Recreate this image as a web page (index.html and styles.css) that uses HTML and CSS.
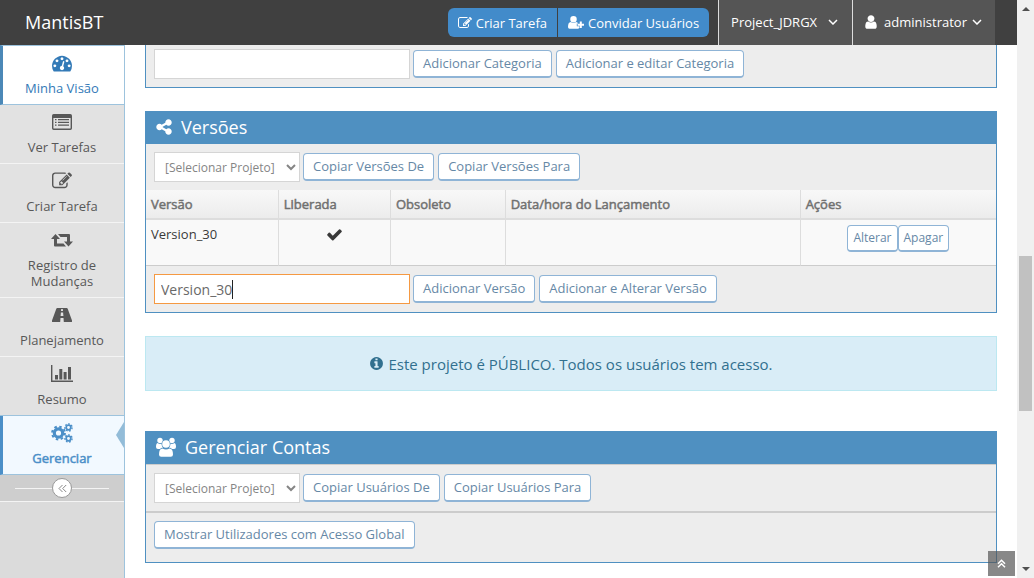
FILE: index.html
```html
<!DOCTYPE html>
<html lang="pt-BR">
<head>
<meta charset="utf-8">
<title>MantisBT</title>
<link rel="stylesheet" href="styles.css">
</head>
<body>
<svg class="sprite" aria-hidden="true">
  <symbol id="i-edit" viewBox="0 0 1792 1792"><path d="M888 1184l116-116-152-152-116 116v56h96v96h56zm440-720q-16-16-33 1l-350 350q-17 17-1 33t33-1l350-350q17-17 1-33zm80 594v190q0 119-84.500 203.500t-203.500 84.500h-832q-119 0-203.500-84.500t-84.500-203.500v-832q0-119 84.500-203.500t203.500-84.500h832q63 0 117 25 15 7 18 23 3 17-9 29l-49 49q-14 14-32 8-23-6-45-6h-832q-66 0-113 47t-47 113v832q0 66 47 113t113 47h832q66 0 113-47t47-113v-126q0-13 9-22l64-64q15-15 35-7t20 29zm-96-738l288 288-672 672h-288v-288zm444 132l-92 92-288-288 92-92q28-28 68-28t68 28l152 152q28 28 28 68t-28 68z"/></symbol>
  <symbol id="i-user" viewBox="0 0 1792 1792"><path d="M1536 1399q0 109-62.500 187t-150.500 78h-854q-88 0-150.500-78t-62.500-187q0-85 8.500-160.500t31.500-152 58.500-131 94-89 134.500-34.500q131 128 313 128t313-128q76 0 134.500 34.500t94 89 58.500 131 31.500 152 8.500 160.500zm-256-887q0 159-112.500 271.500t-271.500 112.500-271.500-112.500-112.500-271.500 112.500-271.500 271.500-112.500 271.500 112.500 112.500 271.500z"/></symbol>
  <symbol id="i-down" viewBox="0 0 10 6"><path d="M1 1l4 4 4-4" fill="none" stroke="currentColor" stroke-width="1.500"/></symbol>
</svg>
<div class="window">
  <div class="page">
    <header class="navbar">
      <a class="brand" href="#">MantisBT</a>
      <div class="nav-actions">
        <a class="nav-btn" href="#"><svg class="icon-14"><use href="#i-edit"/></svg>Criar Tarefa</a>
        <a class="nav-btn" href="#"><svg class="icon-add" viewBox="0 0 16 13"><path d="M5.500 0a3.200 3.200 0 0 1 0 6.500a3.200 3.200 0 0 1 0-6.500zM2.800 6q2.700 2 5.400 0q1.500.2 2 1.500H8.800v2.700h2.500V12q-.5.800-1.500.8H1.600Q0 12.800 0 11q0-4.800 2.800-5zM11.800 5.500h2v2.200H16v2h-2.200V12h-2V9.700H9.600v-2h2.200z"/></svg>Convidar Usuários</a>
      </div>
      <button class="nav-menu project" type="button">Project_JDRGX<svg class="chevron"><use href="#i-down"/></svg></button>
      <button class="nav-menu account" type="button"><svg class="icon-user"><use href="#i-user"/></svg>administrator<svg class="chevron"><use href="#i-down"/></svg></button>
    </header>
    <div class="columns">
      <nav class="sidebar">
        <a class="side-item current" href="#"><svg class="icon-side" viewBox="0 0 1792 1792"><path d="M384 1152q0-53-37.500-90.500t-90.500-37.500-90.500 37.500-37.500 90.500 37.500 90.500 90.500 37.500 90.500-37.500 37.500-90.500zm192-448q0-53-37.500-90.500t-90.500-37.500-90.500 37.500-37.500 90.500 37.500 90.500 90.500 37.500 90.500-37.500 37.500-90.500zm428 481l101-382q6-26-7.500-48.500t-38.500-29.500-48 6.500-30 39.500l-101 382q-60 5-107 43.500t-63 98.500q-20 77 20 146t117 89 146-20 89-117q16-60-6-117t-72-91zm660-33q0-53-37.500-90.500t-90.500-37.500-90.500 37.500-37.500 90.500 37.500 90.500 90.500 37.500 90.500-37.500 37.500-90.500zm-640-640q0-53-37.500-90.500t-90.500-37.500-90.500 37.500-37.500 90.500 37.500 90.500 90.500 37.500 90.500-37.500 37.500-90.500zm448 192q0-53-37.500-90.500t-90.500-37.500-90.500 37.500-37.500 90.500 37.500 90.500 90.500 37.500 90.500-37.500 37.500-90.500zm320 448q0 261-141 483-19 29-54 29h-1402q-35 0-54-29-141-221-141-483 0-182 71-348t191-286 286-191 348-71 348 71 286 191 191 286 71 348z"/></svg><span>Minha Visão</span></a>
        <a class="side-item" href="#"><svg class="icon-side" viewBox="0 0 20 20"><path fill-rule="evenodd" d="M1.700 2h16.600Q20 2 20 3.700v12.600q0 1.700-1.700 1.700H1.700Q0 18 0 16.300V3.700Q0 2 1.700 2zM1.400 6v10q0 .6.600.6h16q.6 0 .6-.6V6zM3 7h1.500v1.300H3zM6 7h11v1.300H6zM3 9.700h1.500V11H3zM6 9.700h11V11H6zM3 12.400h1.500v1.300H3zM6 12.400h11v1.300H6z"/></svg><span>Ver Tarefas</span></a>
        <a class="side-item" href="#"><svg class="icon-side"><use href="#i-edit"/></svg><span>Criar Tarefa</span></a>
        <a class="side-item" href="#"><svg class="icon-side wide" viewBox="0 0 22 20"><path d="M4.500 4L9 9H6v4.500h6.500L15 16.500H4Q3 16.500 3 15.500V9H0zM7 4h11q1 0 1 1v6.500h3L17.500 16.500L13 11.500h3V7H9.500z"/></svg><span>Registro de Mudanças</span></a>
        <a class="side-item" href="#"><svg class="icon-side" viewBox="0 0 20 20"><path fill-rule="evenodd" d="M5.300 3h9.400q.7 0 1 .7L20 15.600q.3 1.400-.6 1.400H.6Q-.3 17 0 15.600L4.300 3.700q.3-.7 1-.7zM9.200 4L9 6h2l-.2-2zM8.900 7.500L8.600 11h2.800l-.3-3.500zM8.500 13l-.3 4h3.600l-.3-4z"/></svg><span>Planejamento</span></a>
        <a class="side-item" href="#"><svg class="icon-side wide" viewBox="0 0 22 20"><path d="M0 1h1.400v15.600H22V18H0zM4 11h3v4.500H4zM8.300 5h3v10.500h-3zM12.600 8h3v7.500h-3zM17 3h3v12.500h-3z"/></svg><span>Resumo</span></a>
        <a class="side-item active" href="#"><svg class="icon-side wide" viewBox="0 0 22 20"><g fill="none" stroke="currentColor"><circle cx="7.500" cy="10" r="4.200" stroke-width="3.200"/><circle cx="7.500" cy="10" r="6.400" stroke-width="2" stroke-dasharray="2.500 2.527"/><circle cx="17.500" cy="4.500" r="2.300" stroke-width="1.700"/><circle cx="17.500" cy="4.500" r="3.600" stroke-width="1.300" stroke-dasharray="1.700 1.531"/><circle cx="17.500" cy="15.500" r="2.300" stroke-width="1.700"/><circle cx="17.500" cy="15.500" r="3.600" stroke-width="1.300" stroke-dasharray="1.700 1.531"/></g></svg><span>Gerenciar</span></a>
        <div class="collapse"><button type="button" aria-label="Recolher menu"><svg viewBox="0 0 9 9"><path d="M4.500 1L1 4.500 4.500 8M8.200 1L4.700 4.500 8.200 8"/></svg></button></div>
      </nav>
      <main class="content">
        <section class="widget continued">
          <form class="toolbar">
            <input class="field" type="text" aria-label="Categoria">
            <button class="btn" type="button">Adicionar Categoria</button>
            <button class="btn" type="button">Adicionar e editar Categoria</button>
          </form>
        </section>
        <section class="widget">
          <h4 class="widget-title"><svg class="icon-share" viewBox="0 0 1792 1792"><path d="M1344 1024q133 0 226.500 93.500t93.500 226.500-93.500 226.500-226.500 93.500-226.500-93.500-93.500-226.500q0-12 2-34l-360-180q-92 86-218 86-133 0-226.500-93.500t-93.500-226.500 93.500-226.500 226.500-93.500q126 0 218 86l360-180q-2-22-2-34 0-133 93.500-226.500t226.500-93.500 226.500 93.500 93.500 226.500-93.500 226.500-226.500 93.500q-126 0-218-86l-360 180q2 22 2 34t-2 34l360 180q92-86 218-86z"/></svg>Versões</h4>
          <form class="toolbar">
            <select class="select" aria-label="Projeto"><option>[Selecionar Projeto]</option></select>
            <button class="btn" type="button">Copiar Versões De</button>
            <button class="btn" type="button">Copiar Versões Para</button>
          </form>
          <table class="versions">
            <colgroup><col class="c-version"><col class="c-released"><col class="c-obsolete"><col class="c-date"><col></colgroup>
            <thead><tr><th>Versão</th><th>Liberada</th><th>Obsoleto</th><th>Data/hora do Lançamento</th><th>Ações</th></tr></thead>
            <tbody><tr>
              <td>Version_30</td>
              <td class="center"><svg class="icon-check" viewBox="0 0 1792 1792"><path d="M1671 566q0 40-28 68l-724 724-136 136q-28 28-68 28t-68-28l-136-136-362-362q-28-28-28-68t28-68l136-136q28-28 68-28t68 28l294 295 656-657q28-28 68-28t68 28l136 136q28 28 28 68z"/></svg></td>
              <td></td><td></td>
              <td><div class="row-actions"><button class="btn small" type="button">Alterar</button><button class="btn small" type="button">Apagar</button></div></td>
            </tr></tbody>
          </table>
          <form class="toolbar">
            <div class="field focused"><input type="text" value="Version_30" size="8" aria-label="Versão"><span class="caret"></span></div>
            <button class="btn" type="button">Adicionar Versão</button>
            <button class="btn" type="button">Adicionar e Alterar Versão</button>
          </form>
        </section>
        <p class="alert"><svg class="icon-info" viewBox="0 0 1792 1792"><path d="M1152 1376v-160q0-14-9-23t-23-9h-96v-512q0-14-9-23t-23-9h-320q-14 0-23 9t-9 23v160q0 14 9 23t23 9h96v320h-96q-14 0-23 9t-9 23v160q0 14 9 23t23 9h448q14 0 23-9t9-23zm-128-896v-160q0-14-9-23t-23-9h-192q-14 0-23 9t-9 23v160q0 14 9 23t23 9h192q14 0 23-9t9-23zm640 416q0 209-103 385.500t-279.500 279.500-385.500 103-385.500-103-279.500-279.500-103-385.500 103-385.500 279.500-279.500 385.500-103 385.500 103 279.500 279.500 103 385.500z"/></svg>Este projeto é PÚBLICO. Todos os usuários tem acesso.</p>
        <section class="widget">
          <h4 class="widget-title"><svg class="icon-group" viewBox="0 0 20 20"><g><circle cx="4" cy="3.500" r="2.700"/><circle cx="16" cy="3.500" r="2.700"/><path d="M1.500 6q2.500 1.500 4 .5Q5.500 9 7 10.500q-2 0-3 1.500H2Q0 12 0 10q0-3.500 1.500-4zM18.500 6q-2.500 1.500-4 .5 0 2.500-1.500 4 2 0 3 1.500h2q2 0 2-2 0-3.500-1.500-4z"/><circle cx="10" cy="7" r="3.800"/><path d="M6.500 11.500q3.500 2.200 7 0 3.500 0 3.500 6 0 2.200-2.200 2.200H5.200Q3 19.700 3 17.500q0-6 3.500-6z"/></g></svg>Gerenciar Contas</h4>
          <form class="toolbar ruled">
            <select class="select" aria-label="Projeto"><option>[Selecionar Projeto]</option></select>
            <button class="btn" type="button">Copiar Usuários De</button>
            <button class="btn" type="button">Copiar Usuários Para</button>
          </form>
          <div class="toolbar foot"><button class="btn" type="button">Mostrar Utilizadores com Acesso Global</button></div>
        </section>
      </main>
    </div>
  </div>
  <div class="scrollbar" aria-hidden="true">
    <svg viewBox="0 0 8 4"><path d="M0 4l4-4 4 4z"/></svg>
    <div class="track"><span class="thumb"></span></div>
    <svg viewBox="0 0 8 4"><path d="M0 0h8L4 4z"/></svg>
  </div>
</div>
<a class="to-top" href="#" aria-label="Voltar ao topo"><svg viewBox="0 0 9 9"><path d="M1 4.700L4.500 1.200 8 4.700M1 8.200l3.500-3.500L8 8.200"/></svg></a>
</body>
</html>
```
FILE: styles.css
```css
* { box-sizing: border-box; }

body {
  margin: 0;
  background: #fff;
  color: #393939;
  font-family: "Open Sans", sans-serif;
  font-size: 13px;
  line-height: 20px;
}

svg { fill: currentColor; flex: none; }
a { text-decoration: none; color: inherit; }
button, input, select { font-family: inherit; }
.sprite { position: absolute; width: 0; height: 0; }

.window { display: flex; min-height: 100vh; }
.page { flex: 1; display: flex; flex-direction: column; min-width: 0; }

/* top bar */
.navbar {
  display: flex;
  align-items: center;
  height: 45px;
  padding-right: 22px;
  background: #404040;
  color: #fff;
}
.brand { padding: 0 0 2px 25px; margin-right: auto; font-size: 18px; }
.nav-actions { display: flex; gap: 1px; margin-right: 9px; }
.nav-btn {
  display: flex;
  align-items: center;
  gap: 4px;
  height: 29px;
  padding: 0 10px;
  background: #428bca;
}
.nav-btn:first-child { border-radius: 6px 0 0 6px; }
.nav-btn:last-child { border-radius: 0 6px 6px 0; }
.icon-14 { width: 14px; height: 14px; }
.icon-add { width: 16px; height: 13px; }
.nav-menu {
  display: flex;
  align-items: center;
  height: 100%;
  padding: 0 12px 2px;
  border: 0;
  border-left: 1px solid #ddd;
  background: #555;
  color: #fff;
  font-size: 13px;
}
.chevron { width: 10px; height: 6px; }
.project { gap: 11px; padding-right: 14px; }
.account { gap: 5px; padding-right: 13px; padding-left: 10px; }
.icon-user { width: 16px; height: 18px; }

/* side menu */
.columns { flex: 1; display: flex; }
.sidebar {
  flex: none;
  width: 125px;
  border-right: 1px solid #9dc3dd;
  background: #dbdbdb;
}
.side-item {
  display: flex;
  flex-direction: column;
  align-items: center;
  gap: 7px;
  padding: 7px 12px 8px;
  border-bottom: 1px solid #f4f4f4;
  background: #e2e2e2;
  color: #585858;
  line-height: 16px;
  text-align: center;
}
.icon-side { width: 20px; height: 20px; }
.icon-side.wide { width: 22px; }
.current, .active {
  border-left: 3px solid #4b88b7;
  border-bottom-color: #9dc3dd;
  padding-left: 9px;
}
.current { border-top: 1px solid #9dc3dd; background: #fff; color: #337ab7; }
.active {
  position: relative;
  border-left-color: #4b8fc8;
  box-shadow: 0 -1px #9dc3dd;
  background: #f2f9ff;
  color: #4b8fc8;
}
.active span, .versions th { font-weight: 400; -webkit-text-stroke: 0.5px currentColor; }
.active::after {
  content: "";
  position: absolute;
  right: 0;
  top: 6px;
  border: solid transparent;
  border-width: 13px 8px 13px 0;
  border-right-color: #93bcd8;
}
.collapse {
  display: grid;
  place-items: center;
  height: 27px;
  border-bottom: 1px solid #f4f4f4;
  background: linear-gradient(#f4f4f4, #f4f4f4) center / 94px 1px no-repeat #cecece;
}
.collapse button {
  display: grid;
  place-items: center;
  width: 20px;
  height: 20px;
  padding: 0;
  border: 1px solid #999;
  border-radius: 50%;
  background: #fff;
  color: #888;
}
.collapse svg, .to-top svg { width: 9px; height: 9px; fill: none; stroke: currentColor; }

/* content */
.content { flex: 1; min-width: 0; padding: 0 20px; }
.widget { border: 1px solid #4f90c1; background: #ededed; margin-bottom: 23px; }
.widget:last-child { margin-bottom: 0; }
.continued { border-top: 0; }
.continued .toolbar { padding-top: 4px; }
.widget-title {
  display: flex;
  align-items: center;
  gap: 8px;
  height: 32px;
  margin: 0;
  padding: 0 9px 2px;
  background: #4f90c1;
  color: #fff;
  font-size: 18px;
  font-weight: 400;
}
.icon-share { width: 18px; height: 18px; }
.icon-group { width: 22px; height: 20px; }
.icon-group g { stroke: #4f90c1; stroke-width: 1; paint-order: stroke; }

.toolbar { display: flex; align-items: center; gap: 3px; padding: 8px; }
.toolbar .btn + .btn { margin-left: 1px; }
.ruled { border-top: 1px solid #ccc; border-bottom: 2px solid #ccc; }
.foot { padding-bottom: 13px; }
.field {
  width: 256px;
  height: 30px;
  padding: 0 6px;
  border: 1px solid #d5d5d5;
  background: #fff;
  color: #696969;
  font-size: 14px;
}
.focused { display: flex; align-items: center; border-color: #f59942; }
.focused input {
  field-sizing: content;
  padding: 0;
  border: 0;
  outline: 0;
  color: inherit;
  font-size: inherit;
}
.caret { width: 1px; height: 19px; background: #222; }
.select {
  width: 146px;
  height: 30px;
  padding: 2px 6px;
  border: 1px solid #d5d5d5;
  border-radius: 0;
  background: #fff;
  color: #858585;
  font-size: 12px;
}
.btn {
  height: 28px;
  padding: 0 9px 2px;
  border: 1px solid #8fb4d6;
  border-bottom-width: 2px;
  border-radius: 4px;
  background: #fff;
  color: #6688a6;
  font-size: 13px;
  line-height: 20px;
}
.small { height: 27px; padding: 0 5px; font-size: 12px; }

.versions { width: 100%; border-collapse: separate; border-spacing: 0; table-layout: fixed; }
.c-version { width: 15.500%; }
.c-released { width: 13.200%; }
.c-obsolete { width: 13.500%; }
.c-date { width: 34.700%; }
.versions th, .versions td {
  padding: 4px 5px;
  border-left: 1px solid #ddd;
  text-align: left;
  vertical-align: top;
}
.versions th:first-child, .versions td:first-child { border-left: 0; }
.versions th {
  height: 30px;
  border-bottom: 2px solid #ddd;
  background: linear-gradient(#f8f8f8, #ececec);
  color: #707070;
}
.versions td { height: 46px; background: #f9f9f9; border-bottom: 1px solid #ccc; }
.versions .center { text-align: center; }
.icon-check { width: 17px; height: 17px; margin-top: 2px; }
.row-actions { display: flex; justify-content: center; padding-top: 1px; }

.alert {
  display: flex;
  align-items: center;
  justify-content: center;
  gap: 4px;
  min-height: 55px;
  margin: 0 0 40px;
  border: 1px solid #bce8f1;
  background: #d9edf7;
  color: #31708f;
  font-size: 15px;
}
.icon-info { width: 15px; height: 15px; }

/* scroll bar */
.scrollbar {
  flex: none;
  display: flex;
  flex-direction: column;
  align-items: center;
  width: 17px;
  padding: 7px 0;
  background: #f0f0f0;
  color: #505050;
}
.scrollbar svg { width: 8px; height: 4px; }
.track { flex: 1; display: flex; flex-direction: column; }
.track::before { content: ""; flex: 245; }
.track::after { content: ""; flex: 156; }
.thumb { flex: 155; width: 13px; background: #c1c1c1; }

.to-top {
  position: fixed;
  right: 19px;
  bottom: 2px;
  display: grid;
  place-items: center;
  width: 27px;
  height: 25px;
  background: rgba(85, 85, 85, 0.7);
  color: #fff;
}
.to-top svg { stroke-width: 1.500; }
```
